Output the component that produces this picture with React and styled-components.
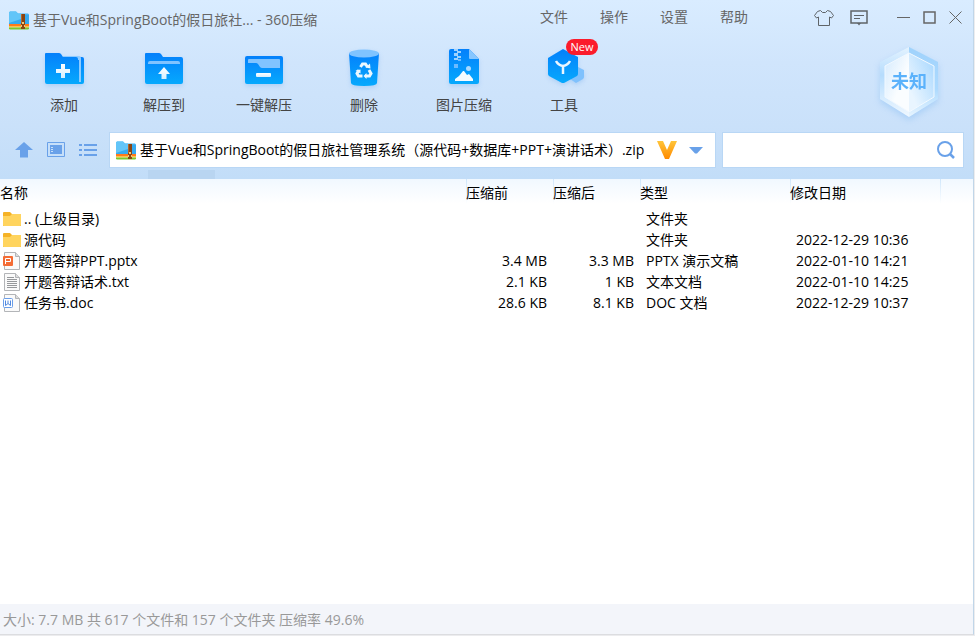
import { useState } from 'react';
import styled, { createGlobalStyle } from 'styled-components';

const archiveName =
	'基于Vue和SpringBoot的假日旅社管理系统（源代码+数据库+PPT+演讲话术）.zip';

const menuItems = ['文件', '操作', '设置', '帮助'];

const files = [
	{ name: '.. (上级目录)', kind: 'folder', type: '文件夹' },
	{ name: '源代码', kind: 'folder', type: '文件夹', date: '2022-12-29 10:36' },
	{
		name: '开题答辩PPT.pptx',
		kind: 'ppt',
		size: '3.4 MB',
		packed: '3.3 MB',
		type: 'PPTX 演示文稿',
		date: '2022-01-10 14:21',
	},
	{
		name: '开题答辩话术.txt',
		kind: 'txt',
		size: '2.1 KB',
		packed: '1 KB',
		type: '文本文档',
		date: '2022-01-10 14:25',
	},
	{
		name: '任务书.doc',
		kind: 'doc',
		size: '28.6 KB',
		packed: '8.1 KB',
		type: 'DOC 文档',
		date: '2022-12-29 10:37',
	},
];

function ArchiveIcon() {
	return (
		<svg width="20" height="19" viewBox="0 0 20 19" aria-hidden="true">
			<path d="M0 1.5 1 .5h6l2 2h10l1 1V14H0z" fill="#45b4f3" />
			<path d="M0 4h20v9H0z" fill="#35aaf0" />
			<path d="M0 1.5 1 .5h6l2 2h3V8L0 12z" fill="#62c5f8" />
			<path d="M0 13h20v2H0z" fill="#ff7a1a" />
			<path d="M0 15h20v1.500H0z" fill="#ffc14a" />
			<path d="M0 16.500h20V18l-1 .5H1L0 18z" fill="#7cc62e" />
			<path d="M12 3h4v15h-4z" fill="#8a4513" />
			<path d="M12 3h1v9h-1z" fill="#b5662a" />
			<path d="M13 11h2v2h-2zM12 14h1v2h-1zM15 14h1v2h-1z" fill="#f2c877" />
		</svg>
	);
}

function BlueGradient({ id }) {
	return (
		<defs>
			<linearGradient id={id} x1="0" y1="0" x2="0" y2="1">
				<stop offset="0" stopColor="#0480fb" />
				<stop offset="1" stopColor="#06a9fd" />
			</linearGradient>
			<linearGradient id={id + 'White'} x1="0" y1="0" x2="0" y2="1">
				<stop offset="0" stopColor="#fff" />
				<stop offset="1" stopColor="#d5efff" />
			</linearGradient>
		</defs>
	);
}

function AddIcon() {
	return (
		<ToolSvg viewBox="-1 0 48 40" aria-hidden="true">
			<BlueGradient id="add" />
			<path d="M30 7h11q2 0 2 2v23q0 2-2 2H30z" fill="url(#add)" />
			<path d="M22 6h16q2 0 2 2v24h-2V10H22z" fill="#8ecbff" />
			<path d="M5 3h13q1 0 2 1l2 3h13q2 0 2 2v25H6q-2 0-2-2V4q0-1 1-1z" fill="url(#add)" />
			<path d="M20 14h4v5h5v4h-5v5h-4v-5h-5v-4h5z" fill="url(#addWhite)" />
		</ToolSvg>
	);
}

function ExtractIcon() {
	return (
		<ToolSvg viewBox="-1 0 48 40" aria-hidden="true">
			<BlueGradient id="extract" />
			<path
				d="M5 3h13q1 0 2 1l2 3h18q2 0 2 2v23q0 2-2 2H6q-2 0-2-2V4q0-1 1-1z"
				fill="url(#extract)"
			/>
			<path d="M7 14v-1q0-2 2-2h28q2 0 2 2v1z" fill="#80c3ff" />
			<path d="m23 17 6 7h-3.500v5h-5v-5H17z" fill="url(#extractWhite)" />
		</ToolSvg>
	);
}

function OneKeyIcon() {
	return (
		<ToolSvg viewBox="-1 0 48 40" aria-hidden="true">
			<BlueGradient id="onekey" />
			<rect x="4" y="6" width="38" height="28" rx="2" fill="url(#onekey)" />
			<path d="M7 10q0-1 1-1h30q1 0 1 1v8H21q-1 0-2-1l-2-3q-1-1-2-1H7z" fill="#80c3ff" />
			<rect x="15" y="23" width="15" height="4" rx="1" fill="url(#onekeyWhite)" />
		</ToolSvg>
	);
}

function DeleteIcon() {
	return (
		<ToolSvg viewBox="-1 0 48 40" aria-hidden="true">
			<BlueGradient id="bin" />
			<path d="M8 3h30l-2 30q0 3-13 3t-13-3z" fill="url(#bin)" />
			<ellipse cx="23" cy="3.500" rx="15" ry="4" fill="#7fc3ff" />
			<g fill="none" stroke="#eaf7ff" strokeWidth="3">
				<path d="m19.500 17 2-3h3l2 3" />
				<path d="m28 20 2 3.500-1.500 2.500h-4" />
				<path d="M21.500 26h-4L16 23.500l2-3.500" />
			</g>
			<path d="m24.500 17.500 5 1-.5-5zM25.500 23v6l-3-3zM14.500 20.500l5-1v4z" fill="#eaf7ff" />
		</ToolSvg>
	);
}

function ImageIcon() {
	return (
		<ToolSvg viewBox="-1 0 48 40" aria-hidden="true">
			<BlueGradient id="image" />
			<path d="M10-1h18l10 10v23q0 2-2 2H10q-2 0-2-2V1q0-2 2-2z" fill="url(#image)" />
			<path d="M28-1 38 9H29q-1 0-1-1z" fill="#86c6ff" />
			<path d="M13-1h4v2h3v2h-3v3h3v2h-3v2h-4V8h3V6h-3V3h3V1h-3z" fill="#9ed2ff" />
			<path d="M17 9h3v2h-3zM13 14h4v4h-4z" fill="#6dbbff" />
			<circle cx="27.500" cy="18.500" r="2.500" fill="#a8d9ff" />
			<path d="M14 31v-2l4-3 4-5h1l3 4 2-1 4 5v2z" fill="#f4fbff" />
		</ToolSvg>
	);
}

function ToolsIcon() {
	return (
		<ToolSvg viewBox="-1 0 48 40" aria-hidden="true">
			<BlueGradient id="tools" />
			<path d="m37 17 6 3v7q0 1-1 2l-7 4-6-4 8-5z" fill="#7fc1fd" />
			<path d="M22-1 37 7v17q0 1-1 2l-13 7h-2L8 26q-1-1-1-2V8z" fill="url(#tools)" />
			<path
				d="M15 11q2 4 7 5 5-1 7-5M22 16v8"
				fill="none"
				stroke="#eaf6ff"
				strokeWidth="2.500"
			/>
		</ToolSvg>
	);
}

function ShieldBadge() {
	return (
		<svg width="64" height="76" viewBox="0 0 64 76" aria-hidden="true">
			<defs>
				<linearGradient id="rimLeft" x1="0" y1="0" x2="0" y2="1">
					<stop offset="0" stopColor="#e4f3ff" />
					<stop offset=".4" stopColor="#b5dcfd" />
					<stop offset="1" stopColor="#f0f8ff" />
				</linearGradient>
				<linearGradient id="rimRight" x1="0" y1="0" x2="0" y2="1">
					<stop offset="0" stopColor="#9fd2fc" />
					<stop offset=".6" stopColor="#addafe" />
					<stop offset="1" stopColor="#e8f5ff" />
				</linearGradient>
				<linearGradient id="faceLeft" x1="0" y1="0" x2="1" y2="1">
					<stop offset="0" stopColor="#d3eafe" />
					<stop offset=".6" stopColor="#fafdff" />
				</linearGradient>
				<linearGradient id="faceRight" x1="1" y1="0" x2="0" y2="1">
					<stop offset="0" stopColor="#a5d6fe" />
					<stop offset=".8" stopColor="#e9f5ff" />
				</linearGradient>
			</defs>
			<path d="M32 1 3 16v37l29 18z" fill="url(#rimLeft)" />
			<path d="m32 1 29 15v37L32 71z" fill="url(#rimRight)" />
			<path d="M32 7 8 20v31l24 15z" fill="url(#faceLeft)" />
			<path d="m32 7 25 13v31L32 66z" fill="url(#faceRight)" />
			<path d="M32 7 8 20v31l24 15 25-15V20z" fill="none" stroke="#f2f9ff" />
		</svg>
	);
}

function FileIcon({ kind }) {
	if (kind === 'folder') {
		return (
			<svg width="18" height="18" viewBox="0 0 18 18" aria-hidden="true">
				<path d="M0 3q0-1 1-1h6l2 2h8q1 0 1 1v11H0z" fill="#f5b226" />
				<path d="M0 6h7l2-2h9v11q0 1-1 1H1q-1 0-1-1z" fill="#ffd45e" />
			</svg>
		);
	}
	return (
		<svg width="18" height="18" viewBox="0 0 18 18" aria-hidden="true">
			<path d="M1.500.5h11l4 4v13h-15z" fill="#fafafa" stroke="#b3b5b8" />
			<path d="M12.500.5v4h4" fill="#ddd" stroke="#b3b5b8" />
			{kind === 'txt' && (
				<path
					d="M4 4.500h7M4 6.500h10M4 8.500h10M4 10.500h10M4 12.500h10M4 14.500h10"
					stroke="#96989b"
				/>
			)}
			{kind === 'ppt' && (
				<>
					<rect y="4" width="10" height="10" rx="1" fill="#f46c35" />
					<path d="M2.500 12V6.500h5v3h-5" fill="none" stroke="#fff" />
				</>
			)}
			{kind === 'doc' && (
				<>
					<rect x=".5" y="4.500" width="9" height="9" rx="1" fill="#fff" stroke="#6a9eea" />
					<path d="M2.500 6.500v5l2.500-2 2.500 2v-5M5 6.500v3" fill="none" stroke="#4f88df" />
				</>
			)}
		</svg>
	);
}

const tools = [
	{ label: '添加', Icon: AddIcon },
	{ label: '解压到', Icon: ExtractIcon },
	{ label: '一键解压', Icon: OneKeyIcon },
	{ label: '删除', Icon: DeleteIcon },
	{ label: '图片压缩', Icon: ImageIcon },
	{ label: '工具', Icon: ToolsIcon, badge: 'New' },
];

function App() {
	const [path, setPath] = useState(archiveName);
	const [query, setQuery] = useState('');

	return (
		<Window>
			<GlobalStyle />
			<Header>
				<TitleBar>
					<Title>
						<ArchiveIcon />
						<span>基于Vue和SpringBoot的假日旅社... - 360压缩</span>
					</Title>
					<Menu>
						{menuItems.map((item) => (
							<MenuButton key={item}>{item}</MenuButton>
						))}
					</Menu>
					<ExtraControls>
						<ControlButton $width={20} aria-label="皮肤">
							<svg width="20" height="18" viewBox="0 0 20 18">
								<path
									d="M6.500 1.500 3.500 2.500.5 6.500l2 2.500 2-1v8.500h11V8l2 1 2-2.500-3-4-3-1-2 2h-3z"
									fill="none"
									stroke="#5f6468"
								/>
							</svg>
						</ControlButton>
						<ControlButton $width={18} aria-label="反馈">
							<svg width="18" height="16" viewBox="0 0 18 16">
								<path d="M1 1h16v12H1z" fill="none" stroke="#5f6468" strokeWidth="1.500" />
								<path d="M4 5.500h10M4 8.500h6" stroke="#5f6468" />
								<path d="M7 13h4l-2 2.500z" fill="#5f6468" />
							</svg>
						</ControlButton>
					</ExtraControls>
					<WindowControls>
						<ControlButton $width={13} aria-label="最小化">
							<svg width="13" height="13" viewBox="0 0 13 13">
								<path d="M0 6.500h13" stroke="#666" />
							</svg>
						</ControlButton>
						<ControlButton $width={13} aria-label="最大化">
							<svg width="13" height="13" viewBox="0 0 13 13">
								<path d="M1 1h11v11H1z" fill="none" stroke="#666" strokeWidth="1.500" />
							</svg>
						</ControlButton>
						<ControlButton $width={13} aria-label="关闭">
							<svg width="13" height="13" viewBox="0 0 13 13">
								<path d="m.5.5 12 12m0-12-12 12" stroke="#666" />
							</svg>
						</ControlButton>
					</WindowControls>
				</TitleBar>

				<Toolbar>
					{tools.map(({ label, Icon, badge }) => (
						<ToolButton key={label}>
							<Icon />
							{label}
							{badge && <NewBadge>{badge}</NewBadge>}
						</ToolButton>
					))}
					<Rating>
						<ShieldBadge />
						<RatingText>未知</RatingText>
					</Rating>
				</Toolbar>

				<AddressBar>
					<NavButtons>
						<ControlButton $width={18} aria-label="上级目录">
							<svg width="18" height="16" viewBox="0 0 18 16">
								<path d="m9 0 9 8h-5v7.500H5V8H0z" fill="#69a1e9" />
							</svg>
						</ControlButton>
						<ControlButton $width={18} aria-label="预览">
							<svg width="18" height="16" viewBox="0 0 18 16">
								<path d="M.5.5h17v14H.5z" fill="none" stroke="#69a1e9" />
								<path d="M3 3h12v9H3z" fill="#69a1e9" />
								<path d="M4 5.500h2M4 7.500h2M4 9.500h2" stroke="#c7dff9" />
							</svg>
						</ControlButton>
						<ControlButton $width={18} aria-label="列表">
							<svg width="18" height="16" viewBox="0 0 18 16">
								<path
									d="M0 3h3M5 3h13M0 8h3M5 8h13M0 13h3M5 13h13"
									stroke="#69a1e9"
									strokeWidth="2"
								/>
							</svg>
						</ControlButton>
					</NavButtons>
					<PathBox>
						<ArchiveIcon />
						<TextInput
							aria-label="路径"
							value={path}
							onChange={(e) => setPath(e.target.value)}
						/>
						<svg width="20" height="18" viewBox="0 0 20 18" aria-hidden="true">
							<defs>
								<linearGradient id="vip" x1="0" y1="0" x2="0" y2="1">
									<stop offset="0" stopColor="#ffc53a" />
									<stop offset="1" stopColor="#ff8a00" />
								</linearGradient>
							</defs>
							<path d="M0 0h6l4 9 4-9h6l-8 18H8z" fill="url(#vip)" />
						</svg>
						<ControlButton $width={38} aria-label="展开路径">
							<svg width="14" height="7" viewBox="0 0 14 7">
								<path d="M0 0h14L8 6.500H6z" fill="#69a1e9" />
							</svg>
						</ControlButton>
					</PathBox>
					<SearchBox>
						<TextInput
							aria-label="搜索"
							value={query}
							onChange={(e) => setQuery(e.target.value)}
						/>
						<ControlButton $width={20} aria-label="搜索文件">
							<svg width="20" height="18" viewBox="0 0 20 18">
								<circle cx="9" cy="8" r="7" fill="none" stroke="#69a1e9" strokeWidth="2" />
								<path d="m14 13 4 4" stroke="#69a1e9" strokeWidth="2.500" />
							</svg>
						</ControlButton>
					</SearchBox>
				</AddressBar>
			</Header>

			<ListArea>
				<FileTable>
					<colgroup>
						<col />
						<Col $width={87} />
						<Col $width={87} />
						<Col $width={150} />
						<Col $width={150} />
						<Col $width={33} />
					</colgroup>
					<thead>
						<tr>
							<Th>名称</Th>
							<Th>压缩前</Th>
							<Th>压缩后</Th>
							<Th>类型</Th>
							<Th>修改日期</Th>
							<Th as="td" />
						</tr>
					</thead>
					<tbody>
						{files.map((file) => (
							<tr key={file.name}>
								<Td>
									<FileName>
										<FileIcon kind={file.kind} />
										{file.name}
									</FileName>
								</Td>
								<Td $align="right">{file.size}</Td>
								<Td $align="right">{file.packed}</Td>
								<Td $indent>{file.type}</Td>
								<Td $indent>{file.date}</Td>
								<Td />
							</tr>
						))}
					</tbody>
				</FileTable>
			</ListArea>

			<StatusBar>大小: 7.7 MB 共 617 个文件和 157 个文件夹 压缩率 49.6%</StatusBar>
		</Window>
	);
}

export default App;

const GlobalStyle = createGlobalStyle`
	* {
		box-sizing: border-box;
	}

	body {
		margin: 0;
		background: #ececee;
		font-family: 'Open Sans', 'Noto Sans CJK SC', sans-serif;
		font-size: 14px;
		line-height: 20px;
		color: #000;
	}

	button, input {
		font: inherit;
		color: inherit;
		border: none;
		background: none;
		padding: 0;
	}

	svg {
		display: block;
		flex-shrink: 0;
	}
`;

const Window = styled.div`
	display: flex;
	flex-direction: column;
	min-height: calc(100vh - 1px);
	margin-right: 1px;
	border-right: 1px solid #c0d6e9;
	border-bottom: 1px solid #dcdde0;
	background: white;
`;

const Header = styled.header`
	background:
		linear-gradient(#b9d5f1, #b9d5f1) 148px 100% / 67px 9px no-repeat,
		linear-gradient(#d9ecff, #d0e5fc 35%, #cae1fa 70%, #c2ddf8);
`;

const TitleBar = styled.div`
	display: flex;
	align-items: center;
	height: 40px;
	padding: 0 11px 0 9px;
`;

const Title = styled.div`
	display: flex;
	flex: 1;
	align-items: center;
	gap: 4px;
	min-width: 0;
	color: #666;
	white-space: nowrap;
`;

const Menu = styled.nav`
	display: flex;
	gap: 32px;
	height: 34px;
	align-self: flex-start;
	margin-right: 66px;
`;

const MenuButton = styled.button`
	color: #666;
	white-space: nowrap;
`;

const ExtraControls = styled.div`
	display: flex;
	align-self: flex-start;
	gap: 16px;
	height: 36px;
	margin-right: 29px;
`;

const WindowControls = styled.div`
	display: flex;
	align-self: flex-start;
	gap: 13px;
	height: 34px;
`;

const ControlButton = styled.button`
	display: flex;
	flex-shrink: 0;
	align-items: center;
	justify-content: center;
	width: ${({ $width }) => $width}px;
`;

const Toolbar = styled.div`
	display: flex;
	height: 92px;
	padding: 10px 32px 0 14px;
`;

const ToolButton = styled.button`
	position: relative;
	display: flex;
	flex-direction: column;
	align-items: center;
	gap: 5px;
	width: 100px;
	height: 65px;
	color: #444;
	white-space: nowrap;
`;

const ToolSvg = styled.svg`
	width: 48px;
	height: 40px;
	overflow: visible;
	filter: drop-shadow(0 2px 2px rgba(80, 150, 230, 0.25));
`;

const NewBadge = styled.span`
	position: absolute;
	top: -11px;
	left: 52px;
	width: 32px;
	height: 16px;
	border-radius: 8px;
	background: #fb1b2b;
	color: white;
	font-size: 11px;
	line-height: 16px;
`;

const Rating = styled.div`
	position: relative;
	width: 64px;
	height: 76px;
	margin: -4px 0 0 auto;
	filter: drop-shadow(0 3px 3px rgba(110, 175, 240, 0.35));
`;

const RatingText = styled.span`
	position: absolute;
	inset: 25px 0 auto;
	color: #5bb2fb;
	font-size: 18px;
	font-weight: bold;
	text-align: center;
`;

const AddressBar = styled.div`
	display: flex;
	gap: 6px;
	padding: 0 9px 11px 15px;
`;

const NavButtons = styled.div`
	display: flex;
	gap: 14px;
	width: 88px;
`;

const PathBox = styled.div`
	display: flex;
	flex: 1;
	align-items: center;
	height: 36px;
	padding-left: 6px;
	border: 1px solid #b9d7f5;
	background: white;
`;

const SearchBox = styled.div`
	display: flex;
	width: 242px;
	align-items: center;
	padding: 0 7px;
	border: 1px solid #b9d7f5;
	background: white;
`;

const TextInput = styled.input`
	flex: 1;
	min-width: 0;
	margin-left: 4px;
	outline: none;
`;

const ListArea = styled.main`
	flex: 1;
`;

const FileTable = styled.table`
	width: 100%;
	table-layout: fixed;
	border-collapse: collapse;
`;

const Col = styled.col`
	width: ${({ $width }) => $width}px;
`;

const Th = styled.th`
	height: 29px;
	padding: 0 0 2px;
	background: linear-gradient(#f1f8ff, #fff 25px);
	font-weight: normal;
	text-align: left;

	& + & {
		background:
			linear-gradient(#cfe6fb, #fff 25px) 0 0 / 1px 25px no-repeat,
			linear-gradient(#f1f8ff, #fff 25px);
	}
`;

const Td = styled.td`
	height: 21px;
	padding: 0 6px 0 ${({ $indent }) => ($indent ? 6 : 0)}px;
	text-align: ${({ $align }) => $align || 'left'};
	white-space: nowrap;
`;

const FileName = styled.div`
	display: flex;
	align-items: center;
	gap: 3px;
	padding-left: 3px;
`;

const StatusBar = styled.footer`
	height: 30px;
	padding: 6px 3px;
	background: #f3f5fa;
	color: #999;
`;
